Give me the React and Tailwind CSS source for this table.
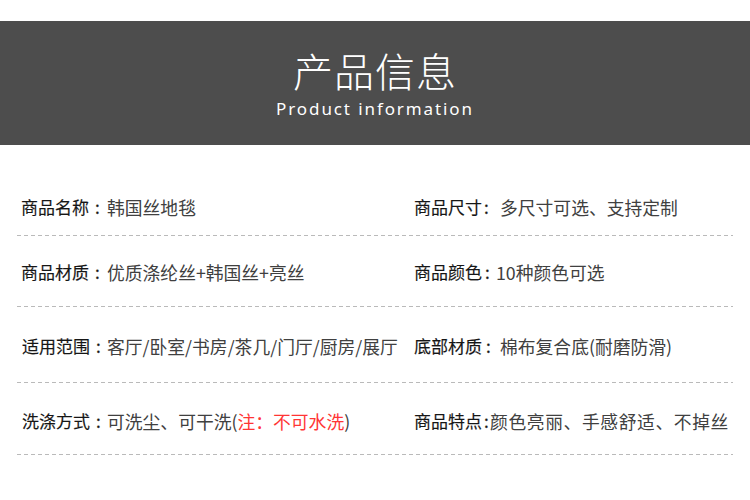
const rows = [
  {
    box: 'h-[90px] pt-[50px]',
    left: { label: '商品名称', colon: 'w-[18px] pl-[6px]', value: '韩国丝地毯' },
    right: { label: '商品尺寸', colon: 'w-[18px] pl-[2px]', value: '多尺寸可选、支持定制' },
  },
  {
    box: 'h-[70px] pt-[24px]',
    left: { label: '商品材质', colon: 'w-[18px] pl-[6px]', value: '优质涤纶丝+韩国丝+亮丝' },
    right: { label: '商品颜色', colon: 'w-[14px] pl-[3px]', value: '10种颜色可选' },
  },
  {
    box: 'h-[75px] pt-[27px]',
    left: { label: '适用范围', colon: 'w-[17px] pl-[6px]', value: '客厅/卧室/书房/茶几/门厅/厨房/展厅', shift: true },
    right: { label: '底部材质', colon: 'w-[18px] pl-[4px]', value: '棉布复合底(耐磨防滑)' },
  },
  {
    box: 'h-[71px] pt-[26px]',
    left: {
      label: '洗涤方式',
      colon: 'w-[17px] pl-[6px]',
      value: (
        <>
          可洗尘、可干洗(<span className="text-[#ff3535]">注：不可水洗</span>)
        </>
      ),
      shift: true,
    },
    right: { label: '商品特点', colon: 'w-[8px] pl-[2px]', value: '颜色亮丽、手感舒适、不掉丝', wide: true },
  },
];

function Cell({ item }) {
  return (
    <div className={`flex items-center whitespace-nowrap leading-6 ${item.shift ? 'pl-[1px]' : ''}`}>
      <span className="text-[17px] text-[#161616] [-webkit-text-stroke:0.15px_#161616]">{item.label}</span>
      <span className={`inline-block text-[17px] text-[#161616] [-webkit-text-stroke:0.3px_#161616] ${item.colon}`}>:</span>
      <span className={`text-[17.8px] text-[#404040] ${item.wide ? 'tracking-[0.6px]' : ''}`}>{item.value}</span>
    </div>
  );
}

export default function App() {
  return (
    <div
      className="w-[750px] h-[500px] bg-white overflow-hidden"
      style={{ fontFamily: '"Noto Sans CJK SC", "Noto Sans", sans-serif' }}
    >
      <header className="mt-[21px] h-[124px] bg-[#4d4d4d] flex flex-col items-center pt-[29px] text-white">
        <h1 className="text-[40px] font-light leading-none tracking-[1px]">产品信息</h1>
        <p
          className="mt-[10px] text-[17px] leading-none tracking-[1.9px]"
          style={{ fontFamily: '"Noto Sans", sans-serif' }}
        >
          Product information
        </p>
      </header>

      <div className="mx-[17px]">
        {rows.map((row, i) => (
          <div key={i}>
            <div className={`grid grid-cols-[397px_1fr] items-start ${row.box}`}>
              <div className="pl-[4px]">
                <Cell item={row.left} />
              </div>
              <div>
                <Cell item={row.right} />
              </div>
            </div>
            <div className="h-px bg-[repeating-linear-gradient(to_right,#bababa_0_4px,transparent_4px_7px)]" />
          </div>
        ))}
      </div>
    </div>
  );
}
